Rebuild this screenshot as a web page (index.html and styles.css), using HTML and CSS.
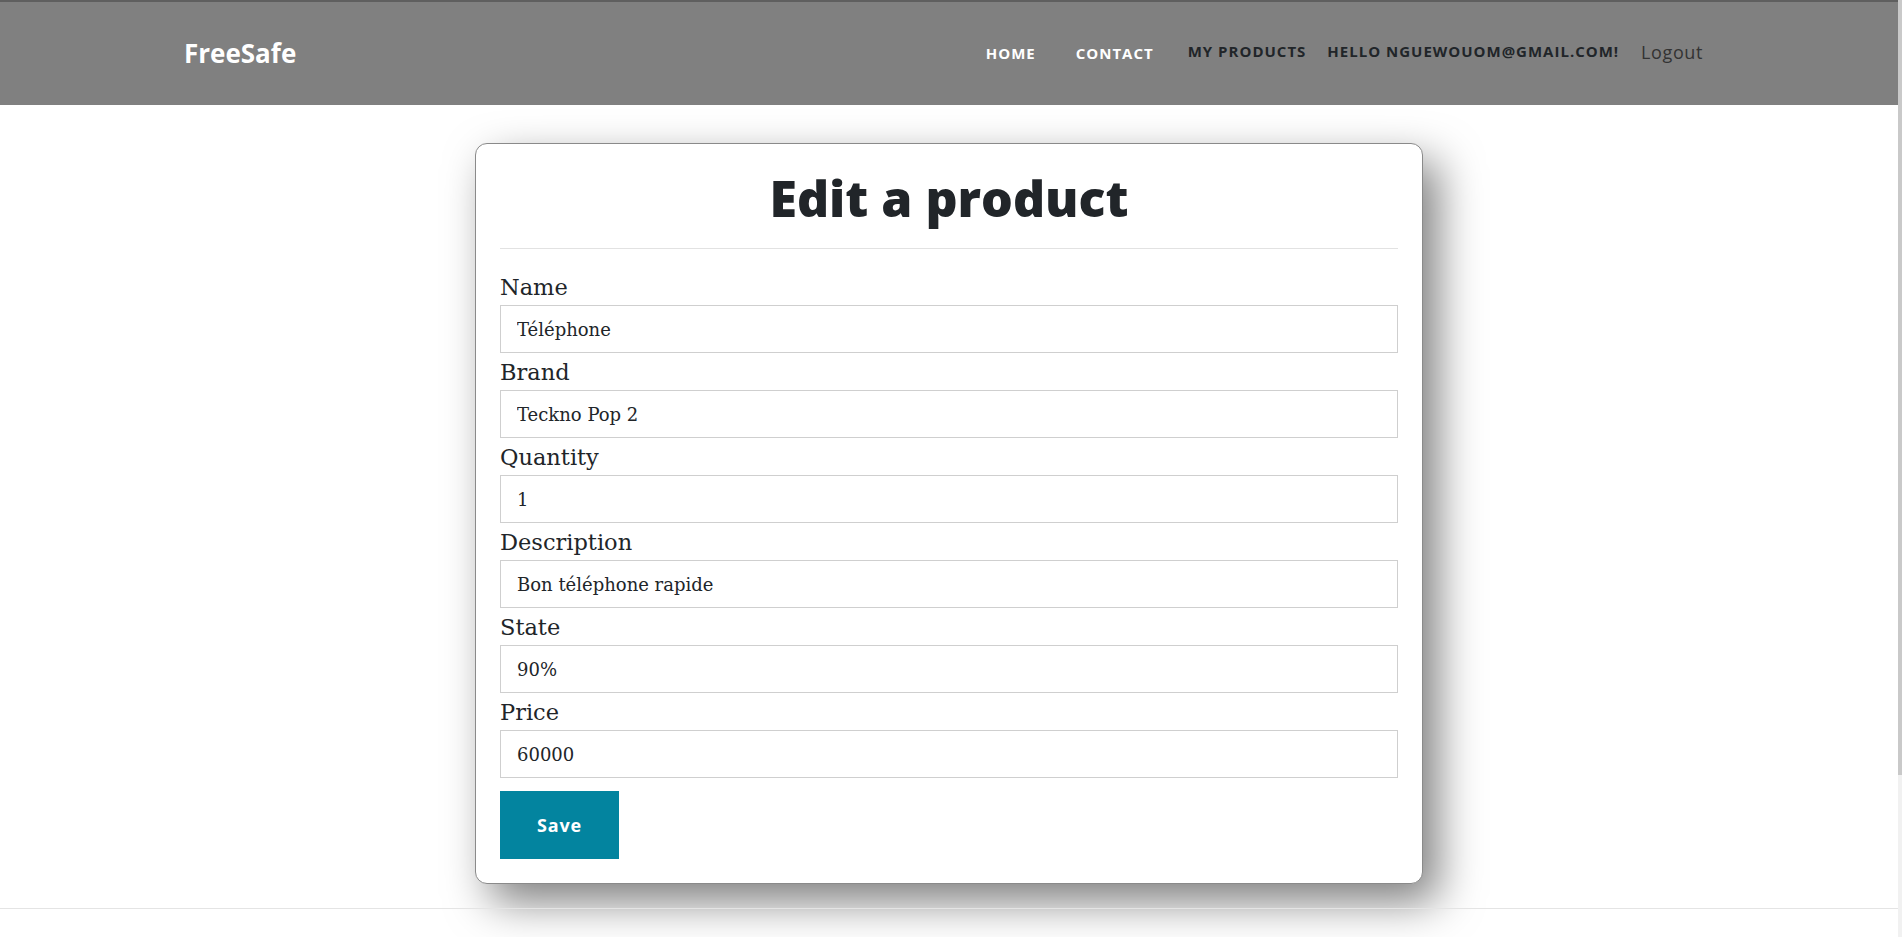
FILE: index.html
```html
<!DOCTYPE html>
<html lang="en">
<head>
<meta charset="utf-8">
<title>FreeSafe - Edit a product</title>
<link rel="stylesheet" href="styles.css">
</head>
<body>
<header class="topbar">
  <a class="brand" href="#">FreeSafe</a>
  <nav class="nav">
    <a class="nav-link light link-home" href="#">HOME</a>
    <a class="nav-link light link-contact" href="#">CONTACT</a>
    <a class="nav-link dark link-products" href="#">MY PRODUCTS</a>
    <span class="nav-link dark link-hello">HELLO NGUEWOUOM@GMAIL.COM!</span>
    <a class="logout" href="#">Logout</a>
  </nav>
</header>
<main class="main">
  <form class="card">
    <h1 class="title">Edit a product</h1>
    <hr class="divider">
    <div class="field">
      <label class="label">Name</label>
      <input class="input" type="text" value="Téléphone">
    </div>
    <div class="field">
      <label class="label">Brand</label>
      <input class="input" type="text" value="Teckno Pop 2">
    </div>
    <div class="field">
      <label class="label">Quantity</label>
      <input class="input" type="text" value="1">
    </div>
    <div class="field">
      <label class="label">Description</label>
      <input class="input" type="text" value="Bon téléphone rapide">
    </div>
    <div class="field">
      <label class="label">State</label>
      <input class="input" type="text" value="90%">
    </div>
    <div class="field">
      <label class="label">Price</label>
      <input class="input" type="text" value="60000">
    </div>
    <button class="save" type="button">Save</button>
  </form>
</main>
<footer class="footer"></footer>
<div class="scrollbar"><div class="scroll-thumb"></div></div>
</body>
</html>
```
FILE: styles.css
```css
body {
  margin: 0;
  padding-right: 4px;
  background: #ffffff;
  font-family: "Open Sans", "Liberation Sans", sans-serif;
  color: #212529;
}
a {
  text-decoration: none;
}
.scrollbar {
  position: fixed;
  top: 0;
  right: 0;
  width: 4px;
  height: 100vh;
  background: #f1f1f1;
}
.scroll-thumb {
  height: 775px;
  background: #c9c9c9;
}
.topbar {
  height: 103px;
  background: #808080;
  border-top: 2px solid #5f5f5f;
  display: flex;
  align-items: center;
  justify-content: space-between;
  padding: 0 195px 0 184px;
}
.brand {
  font-family: "Open Sans", sans-serif;
  font-weight: 700;
  font-size: 26px;
  color: #ffffff;
  margin-top: -1px;
}
.nav {
  display: flex;
  align-items: center;
  margin-top: -3px;
}
.nav-link {
  font-weight: 700;
  font-size: 15px;
  letter-spacing: 1px;
  line-height: 20px;
}
.light {
  color: #ffffff;
}
.dark {
  color: #212529;
}
.link-home {
  margin-top: 2px;
}
.link-contact {
  margin-left: 40px;
  margin-top: 2px;
}
.link-products {
  margin-left: 34px;
  margin-top: -2px;
}
.link-hello {
  margin-left: 21px;
  margin-top: -2px;
}
.logout {
  margin-left: 22px;
  font-size: 18px;
  color: #333333;
  letter-spacing: 0.6px;
}
.main {
  padding-top: 38px;
}
.card {
  box-sizing: border-box;
  width: 948px;
  margin: 0 auto;
  border: 1px solid #8a8a8a;
  border-radius: 12px;
  background: #ffffff;
  padding: 20px 24px 24px;
  box-shadow: 15px 18px 44px rgba(0, 0, 0, 0.5);
  display: flex;
  flex-direction: column;
}
.title {
  margin: 0;
  text-align: center;
  font-family: "Open Sans", sans-serif;
  font-weight: 800;
  font-size: 50px;
  line-height: 68px;
  color: #212529;
}
.divider {
  margin: 16px 0 19px;
  border: 0;
  border-top: 1px solid #e2e2e2;
  height: 0;
}
.field {
  display: flex;
  flex-direction: column;
}
.label {
  font-family: "DejaVu Serif", "Liberation Serif", serif;
  font-size: 22.5px;
  line-height: 35px;
  padding-top: 2px;
  color: #212529;
}
.input {
  box-sizing: border-box;
  height: 48px;
  margin: 0;
  border: 1px solid #cfcfcf;
  padding: 0 16px;
  font-family: "DejaVu Serif", "Liberation Serif", serif;
  font-size: 18px;
  color: #212529;
  background: #ffffff;
  outline: none;
}
.save {
  align-self: flex-start;
  margin-top: 13px;
  width: 119px;
  height: 68px;
  border: 0;
  background: #03849f;
  color: #ffffff;
  font-family: "Open Sans", sans-serif;
  font-weight: 700;
  font-size: 18px;
  letter-spacing: 0.8px;
  cursor: pointer;
}
.footer {
  margin-top: 24px;
  border-top: 1px solid #e4e4e4;
  height: 120px;
}
```
